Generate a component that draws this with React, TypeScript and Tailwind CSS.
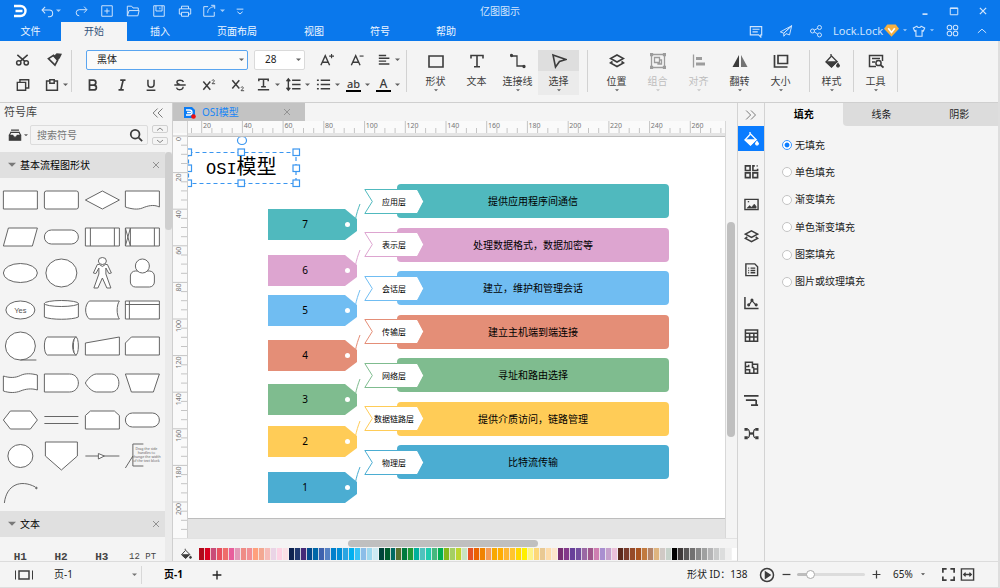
import { useState } from "react";
import type { ReactNode } from "react";

interface IconProps {
	children: ReactNode;
	className?: string;
	sw?: number;
}

const Icon = ({ children, className = "size-4", sw = 1.3 }: IconProps) => (
	<svg viewBox="0 0 16 16" fill="none" stroke="currentColor" strokeWidth={sw} className={`shrink-0 ${className}`} aria-hidden="true">
		{children}
	</svg>
);

const Caret = ({ className = "w-[5px]" }: { className?: string }) => (
	<svg viewBox="0 0 6 4" fill="currentColor" className={`shrink-0 opacity-80 ${className}`} aria-hidden="true">
		<path d="M0 .5h6L3 3.5z" />
	</svg>
);

const Divider = () => <div className="h-[42px] w-px shrink-0 self-start bg-[#d2d2d2] mt-px" />;

/* ---------- header ---------- */

const quickActions = [
	{ name: "重做", icon: <path d="M14.500 6.500H6a3.500 3.500 0 0 0 0 7M11.500 3l3.300 3.500-3.300 3.500" /> },
	{ name: "新建", icon: <path d="M2 2h12v12H2zM8 5v6M5 8h6" /> },
	{ name: "打开", icon: <path d="M1.500 13.500V2.500h5l1.500 2h6v3M1.500 13.500l2-6h11.500l-1.500 6z" /> },
	{ name: "保存", icon: <path d="M2 2h12v12H2zM4.500 2v6h7V2M9 4v2" /> },
	{ name: "打印", icon: <path d="M4 5.500v-3h8v3M4 11.500H1.500v-6h13v6H12M4 9.500h8v4.500H4z" /> },
];

const menuTabs = ["插入", "页面布局", "视图", "符号", "帮助"];

const Header = () => (
	<header className="bg-[#0a78ec] text-[#d3e6fc]">
		<div className="grid grid-cols-[1fr_auto_1fr] h-[22px] items-center">
			<div className="flex items-center pl-3">
				<svg viewBox="0 0 16 16" className="w-4 h-4 mr-3 text-white" fill="none" stroke="currentColor" strokeWidth="2.400">
					<path d="M2 3h6.500a5 5 0 0 1 0 10H2M3.500 8h7" />
				</svg>
				<button aria-label="撤销" className="flex items-center gap-px w-7">
					<Icon sw={1.100} className="size-[15px]"><path d="M2.500 6.500H10a3.500 3.500 0 0 1 0 7H8.500M5.500 3L2.200 6.500l3.300 3.500" /></Icon>
					<Caret />
				</button>
				{quickActions.map((a) => (
					<button key={a.name} aria-label={a.name} className="flex justify-center w-[26px]">
						<Icon sw={1.100} className="size-[14px]">{a.icon}</Icon>
					</button>
				))}
				<button aria-label="导出" className="flex items-center gap-1 w-[30px] pl-1">
					<Icon sw={1.100} className="size-[14px]"><path d="M7 3H2v11h12V9M6.500 10c0-4 3-6.500 7.500-7M10.500 1.500H14.500V5.500" /></Icon>
					<Caret />
				</button>
				<button aria-label="更多" className="flex justify-center w-6">
					<Icon className="size-3"><path d="M3.500 5.500h9M4.500 9L8 12l3.500-3" /></Icon>
				</button>
			</div>
			<h1 className="text-[10px] leading-none">亿图图示</h1>
			<div className="flex justify-end pr-[3px]">
				<button aria-label="最小化" className="w-[29px] flex justify-center"><Icon sw={2.600} className="size-2.5"><path d="M4 13h8" /></Icon></button>
				<button aria-label="最大化" className="w-[29px] flex justify-center"><Icon sw={1.600} className="size-2.5"><path d="M2 3h12v11H2zM2 4h12" /></Icon></button>
				<button aria-label="关闭" className="w-[29px] flex justify-center"><Icon sw={2} className="size-2.5"><path d="M3 3l10 10M13 3L3 13" /></Icon></button>
			</div>
		</div>
		<nav className="flex h-[19px] text-[10px] leading-[19px] text-[#eef6ff]">
			<button className="w-[61px]">文件</button>
			<button className="w-[66px] bg-[#f4f4f4] text-[#33527a]">开始</button>
			{menuTabs.map((t) => (
				<button key={t} className={t.length > 2 ? "w-[88px]" : "w-[66px]"}>{t}</button>
			))}
			<div className="ml-auto flex items-center pr-[3px] pb-0.5 text-[#cfe4fd]">
				<button aria-label="评论" className="w-[30px] flex justify-center"><Icon className="size-[14px]"><path d="M1.500 3h13v9.500h-1V15l-2.500-2.500H1.500zM4 6h8M4 9h6" /></Icon></button>
				<button aria-label="发送" className="w-[30px] flex justify-center"><Icon sw={1.100} className="size-[14px]"><path d="M14.500 2L1.500 9l4 1.500zM14.500 2l-2.500 10.500-4-1.500M14.500 2l-9 8.500V14L8 11" /></Icon></button>
				<button aria-label="分享" className="w-[30px] flex justify-center">
					<Icon sw={1.100} className="size-[14px]"><circle cx="4" cy="8" r="2.300" /><circle cx="12" cy="4" r="2.300" /><circle cx="12" cy="12.500" r="2.300" /><path d="M6 7l4-2M6 9l4 2.500" /></Icon>
				</button>
				<button className="flex items-center w-[77px] pl-0.5">
					<span className="text-[11px] leading-none">Lock.Lock</span>
					<svg viewBox="0 0 16 14" className="w-[15px] ml-px">
						<path d="M3.500.5h9L16 5l-8 8.500L0 5z" fill="#f5b041" />
						<path d="M4.500 4.500L8 9l3.500-4.500" fill="none" stroke="#fff" strokeWidth="1.800" />
					</svg>
					<Caret className="w-1 ml-1" />
				</button>
				<button aria-label="皮肤" className="flex items-center gap-1 w-[29px] pl-1">
					<Icon className="size-[14px]"><path d="M5.500 2.500c1 2 4 2 5 0l4 2-1.500 3.500-1.500-.5v6.500h-7V7.500L3 8 1.500 4.500z" /></Icon>
					<Caret className="w-1" />
				</button>
				<button aria-label="应用" className="w-[30px] flex justify-center">
					<Icon className="size-[13px]"><rect x="1.500" y="1.500" width="5.500" height="5.500" rx="2.500" /><rect x="9" y="1.500" width="5.500" height="5.500" rx="2.500" /><rect x="1.500" y="9" width="5.500" height="5.500" rx="2.500" /><rect x="9" y="9" width="5.500" height="5.500" rx="2.500" /></Icon>
				</button>
				<button aria-label="收起" className="w-[30px] flex justify-center"><Icon className="size-3"><path d="M2.500 10.500L8 5.500l5.500 5" /></Icon></button>
			</div>
		</nav>
	</header>
);

/* ---------- ribbon ---------- */

interface BigTool {
	name: string;
	icon: ReactNode;
	disabled?: boolean;
	active?: boolean;
	plain?: boolean;
}

const layersIcon = <path d="M8 2l6.500 3.500L8 9 1.500 5.500zM3.500 8.500l-2 1.500L8 13.500 14.500 10l-2-1.500" strokeWidth="1.600" />;

const insertTools: BigTool[] = [
	{ name: "形状", icon: <path d="M1 3h14v11H1z" strokeWidth="1.600" /> },
	{ name: "文本", plain: true, icon: <path d="M2 5.500V2.500h12v3M8 2.500v11M5 13.700h6" strokeWidth="1.600" /> },
	{ name: "连接线", icon: <><path d="M2 3h5v10h6" /><circle cx="1.500" cy="2.500" r="1" fill="currentColor" /><circle cx="14" cy="13.500" r="1" fill="currentColor" /></> },
	{ name: "选择", active: true, icon: <path d="M2 2l13 4.500L8.500 8.500 4.500 14z" strokeWidth="1.600" /> },
];

const arrangeTools: BigTool[] = [
	{ name: "位置", icon: layersIcon },
	{ name: "组合", disabled: true, icon: <path d="M1.500 1.500h13v13h-13zM4.500 4.500h5v5h-5zM8 9.500V11h3.500V7H10M.5.5h2v2h-2zM13.500.5h2v2h-2zM.5 13.500h2v2h-2zM13.500 13.500h2v2h-2z" /> },
	{ name: "对齐", disabled: true, icon: <><path d="M2.500 1.500v13" /><path d="M5 5.500h6M5 11h9" strokeWidth="3" /></> },
	{ name: "翻转", icon: <><path d="M7 2v12H.5z" fill="currentColor" stroke="none" /><path d="M9 2v12h6.500z" fill="currentColor" stroke="none" opacity=".7" /></> },
	{ name: "大小", icon: <path d="M1.500 2v12h13M5 2.500h9.500v8H5z" strokeWidth="1.700" /> },
];

const bucket = (
	<>
		<path d="M7 3.500L2 9l5.500 5L13 8.500 7 2.500V1" />
		<path d="M3 9h9.500l-5 4.500zM14 10.500l1.300 2a1.300 1.300 0 1 1-2.600 0z" fill="currentColor" />
	</>
);

const ToolButton = ({ tool }: { tool: BigTool }) => (
	<button
		disabled={tool.disabled}
		className={`flex flex-col items-center w-[41px] h-[45px] text-[10px] text-[#3c3c3c] disabled:text-[#bdbdbd] ${tool.active ? "bg-[#ebebeb]" : ""}`}
	>
		<span className={`flex w-full h-[21px] items-center justify-center ${tool.active ? "bg-[#dedede]" : ""} ${tool.disabled ? "text-[#9c9c9c]" : ""}`}>
			<Icon>{tool.icon}</Icon>
		</span>
		<span className="leading-[15px] mt-[3px] whitespace-nowrap">{tool.name}</span>
		{!tool.plain && <Caret className="w-1" />}
	</button>
);

const textTools = [
	{ name: "加粗", icon: <path d="M4 2.500h4.500a2.700 2.700 0 0 1 0 5.500H4zM4 8h5a2.800 2.800 0 0 1 0 5.700H4z" strokeWidth="2" /> },
	{ name: "斜体", icon: <path d="M6 2.500h6M4 13.500h6M9.300 2.500L6.700 13.500" strokeWidth="1.900" /> },
	{ name: "下划线", icon: <path d="M4.500 2v5a3.500 3.500 0 0 0 7 0V2M3 14h10" strokeWidth="1.700" /> },
	{ name: "删除线", icon: <path d="M12 4.500C11 2 5 1.800 4.500 4.500 4.300 6 5.500 7 8 7.500M1.500 8h13M11.500 10c.5 4-6.500 4.500-7.500 1" strokeWidth="1.600" /> },
	{ name: "上标", icon: <><path d="M1.500 4l8 9.500M9.500 4l-8 9.500" strokeWidth="1.700" /><path d="M11.500 3c.5-1.500 3-1 2.500.5L11.500 6.500H15" strokeWidth="1" /></> },
	{ name: "下标", icon: <><path d="M1.500 2.500l8 9.500M9.500 2.500l-8 9.500" strokeWidth="1.700" /><path d="M11.500 11c.5-1.500 3-1 2.500.5L11.500 14.500H15" strokeWidth="1" /></> },
];

const menuTools = [
	{ name: "文字方向", icon: <path d="M3 4.500v-2h10v2M8 2.500V10M5.500 10.500h5M2 13.500h12" strokeWidth="1.600" /> },
	{ name: "行距", icon: <path d="M6.500 3.500h9M6.500 8h9M6.500 12.500h9M2.500 2v12M.5 4.500l2-2.500 2 2.500M.5 11.500l2 2.500 2-2.500" strokeWidth="1.500" /> },
	{ name: "列表", icon: <path d="M5 3.500h10M5 8h10M5 12.500h10M1 3.500h2M1 8h2M1 12.500h2" strokeWidth="1.600" /> },
];

const Ribbon = () => (
	<div className="flex h-[62px] pt-2 bg-[#f4f4f4] border-b border-[#cfcfcf] text-[#3c3c3c]">
		<div className="grid grid-cols-[35px_28px] grid-rows-[21px_21px] gap-y-1 pl-2 w-[71px] content-start">
			<button aria-label="剪切" className="flex items-center justify-center pr-1.5">
				<Icon sw={1.600} className="size-[15px]"><circle cx="4" cy="11.500" r="2.300" /><circle cx="12" cy="11.500" r="2.300" /><path d="M2.500 3l8 7M13.500 3l-8 7" /></Icon>
			</button>
			<button aria-label="格式刷" className="flex items-center">
				<Icon className="size-[15px] ml-1"><path d="M1.500 7l5.500-3.500 4.500 5-3 5.500zM7 4l4.500 5" strokeWidth="1.700" /><path d="M8 4.500l3 3.500 2-1.500 2-4-4.500-.5z" fill="currentColor" /></Icon>
			</button>
			<button aria-label="复制" className="flex items-center justify-center pr-1.5">
				<Icon sw={1.600} className="size-[14px]"><path d="M1.500 5h9.500v9H1.500zM4.500 4.500V2h10v9.500H11" /></Icon>
			</button>
			<button aria-label="粘贴" className="flex items-center gap-1 pl-0.5">
				<Icon sw={1.700} className="size-[14px]"><path d="M5 3.500H1.800v10.500h12.400V3.500H11M5.500 2h5v4h-5z" /></Icon>
				<Caret />
			</button>
		</div>
		<Divider />
		<div className="flex flex-col gap-1 pl-2 w-[334px]">
			<div className="flex h-[21px] items-center">
				<label className="relative ml-1.5">
					<select aria-label="字体" className="appearance-none block w-[162px] h-5 border border-[#5aa5f0] rounded-xs bg-[#fafafa] pl-2.5 text-[10px] text-[#222]">
						<option>黑体</option>
						<option>宋体</option>
					</select>
					<Caret className="w-[5px] absolute right-1 top-2 pointer-events-none" />
				</label>
				<label className="relative ml-1.5">
					<select aria-label="字号" className="appearance-none block w-[51px] h-5 border border-[#dadada] rounded-xs bg-white pl-2.5 text-[10px] text-[#222]">
						<option>28</option>
						<option>36</option>
					</select>
					<Caret className="w-[5px] absolute right-1 top-2 pointer-events-none" />
				</label>
				<button aria-label="增大字号" className="ml-[7px] w-[30px] flex justify-center">
					<Icon sw={1.600} className="size-[14px]"><path d="M1 14L6 3l5 11M3 10.500h6" /><path d="M10.500 3.500H16M13.200 1v5" strokeWidth="1.300" /></Icon>
				</button>
				<button aria-label="减小字号" className="w-[30px] flex justify-center">
					<Icon sw={1.600} className="size-[14px]"><path d="M1.500 14l5-11 5 11M3.500 10.500h6" /><path d="M11 3.500h4.500" strokeWidth="1.300" /></Icon>
				</button>
				<button aria-label="对齐方式" className="flex items-center gap-1 w-[30px] pl-1.5">
					<Icon sw={1.700} className="size-[13px]"><path d="M1 3h9M1 6.500h13M1 10h9M1 13.500h13" /></Icon>
					<Caret />
				</button>
			</div>
			<div className="flex h-[21px] items-center">
				<div className="flex gap-1 mr-0.5">
					{textTools.map((t) => (
						<button key={t.name} aria-label={t.name} className="flex items-center justify-center w-[25px] h-[21px]">
							<Icon className="size-[14px]">{t.icon}</Icon>
						</button>
					))}
				</div>
				{menuTools.map((t) => (
					<button key={t.name} aria-label={t.name} className="flex items-center gap-1 w-[30px] pl-1">
						<Icon className="size-[15px]">{t.icon}</Icon>
						<Caret />
					</button>
				))}
				<button aria-label="突出显示" className="flex items-center gap-1 w-[30px] pl-1">
					<span className="w-[15px] border-b-2 border-black text-[11px] leading-[12px] font-medium text-center">ab</span>
					<Caret />
				</button>
				<button aria-label="字体颜色" className="flex items-center gap-1 w-[30px] pl-1">
					<span className="w-[15px] border-b-2 border-black text-[12px] leading-[12px] text-center font-medium">A</span>
					<Caret />
				</button>
			</div>
		</div>
		<Divider />
		<div className="flex px-2 mt-px">
			{insertTools.map((t) => <ToolButton key={t.name} tool={t} />)}
		</div>
		<Divider />
		<div className="flex px-2 mt-px">
			{arrangeTools.map((t) => <ToolButton key={t.name} tool={t} />)}
		</div>
		<Divider />
		<div className="flex mt-px px-px"><ToolButton tool={{ name: "样式", icon: bucket }} /></div>
		<Divider />
		<div className="flex mt-px px-px">
			<ToolButton tool={{ name: "工具", icon: <><path d="M8 13.500H1.500v-11h13V8M4 5.500h8M4 9h3" strokeWidth="1.500" /><circle cx="10.500" cy="10" r="2.600" strokeWidth="1.500" /><path d="M12.500 12l3 2.500" strokeWidth="1.700" /></> }} />
		</div>
		<Divider />
	</div>
);

/* ---------- symbol library ---------- */

const box = "M3 9h34v18H3z";

const symbols: { id: string; art: ReactNode }[] = [
	{ id: "process", art: <path d={box} /> },
	{ id: "rounded", art: <rect x="3" y="9" width="34" height="18" rx="2" /> },
	{ id: "decision", art: <path d="M20 9l17 9-17 9-17-9z" /> },
	{ id: "document", art: <path d="M3 9h34v16c-6-3-12-1-17 1s-11 1-17-1z" /> },
	{ id: "data", art: <path d="M8 9h29l-5 18H3z" /> },
	{ id: "terminator", art: <rect x="3" y="11" width="34" height="14" rx="7" /> },
	{ id: "predefined", art: <><path d={box} /><path d="M8 9v18M32 9v18" /></> },
	{ id: "loop", art: <><path d={box} /><path d="M8 9v18M32 9v18M3 9l5 18M8 9L3 27" /></> },
	{ id: "ellipse", art: <ellipse cx="20" cy="18" rx="17" ry="9.500" /> },
	{ id: "circle", art: <ellipse cx="20" cy="18" rx="15.500" ry="14" /> },
	{ id: "man", art: <><ellipse cx="20" cy="6" rx="4" ry="3.500" /><path d="M15 9.500h2l3 2 3-2h2l4 8.500-2.500.5-3-5.500v6l5 14h-4L20 23l-4.500 10h-4l5-14v-6l-3 5.500L11 18z" /></> },
	{ id: "person", art: <><rect x="8" y="16" width="24" height="16" rx="5" /><ellipse cx="20" cy="11" rx="7" ry="7" /></> },
	{ id: "yes", art: <><ellipse cx="20" cy="18" rx="14.500" ry="9" /><text x="20" y="21" textAnchor="middle" fontSize="7.500" fontWeight="500" fontFamily="Liberation Sans, sans-serif" fill="#555" stroke="none">Yes</text></> },
	{ id: "database", art: <><path d="M3 11v14c6 3 28 3 34 0V11" /><ellipse cx="20" cy="11.500" rx="17" ry="3" /></> },
	{ id: "stored", art: <path d="M7 9h30c-3 4-3 14 0 18H7C2 23 2 13 7 9z" /> },
	{ id: "internal", art: <><path d={box} /><path d="M7 9v18M3 12.500h34" /></> },
	{ id: "sequential", art: <><ellipse cx="20" cy="18" rx="15" ry="14" /><path d="M20 32h16" /></> },
	{ id: "direct", art: <><path d="M6 9h29c-5 1-5 17 0 18H6c-4-1-4-17 0-18z" /><ellipse cx="34.500" cy="18" rx="2.500" ry="9" /></> },
	{ id: "manual-input", art: <path d="M3 15l34-6v18H3z" /> },
	{ id: "card", art: <path d="M9 9h28v18H3V15z" /> },
	{ id: "tape", art: <path d="M3 11c6 2 12 2 17-.5s11-2 17-.5v15c-6-2-12-1-17 1s-11 2-17 0z" /> },
	{ id: "delay", art: <path d="M3 9h25c12 0 12 18 0 18H3z" /> },
	{ id: "display", art: <path d="M14 9h15c10 0 10 18 0 18H14c-4 0-9-5-11-9 2-4 7-9 11-9z" /> },
	{ id: "manual-op", art: <path d="M3 9h34l-6 18H9z" /> },
	{ id: "preparation", art: <path d="M10 9h20l7 9-7 9H10l-7-9z" /> },
	{ id: "parallel", art: <path d="M3 14.500h34M3 21.500h34" /> },
	{ id: "loop-limit", art: <path d="M8 9h24l5 4.500V27H3V13.500z" /> },
	{ id: "end", art: <rect x="3" y="11" width="34" height="14" rx="7" /> },
	{ id: "reference", art: <ellipse cx="20" cy="18" rx="12.500" ry="11.500" /> },
	{ id: "off-page", art: <path d="M4 4h32v14L20 32 4 18z" /> },
	{ id: "connector", art: <><path d="M3 18h34" /><path d="M16 15.500l6 2.500-6 3z" /></> },
	{
		id: "note",
		art: (
			<>
				<path d="M21 6H10.500v22H21M3 30l7.500-12" fill="none" />
				<g fontSize="3.500" fill="#666" stroke="none" textAnchor="middle">
					<text x="24" y="12">Drag the side</text>
					<text x="24" y="16">handles to</text>
					<text x="24" y="20">change the width</text>
					<text x="24" y="24">of the text block</text>
				</g>
			</>
		),
	},
	{ id: "arc", art: <><path d="M4 28C6 10 20 4 35 12" fill="none" /><circle cx="36" cy="13" r=".8" fill="#555" /></> },
];

const SectionTitle = ({ title }: { title: string }) => (
	<div className="flex items-center h-[26px] bg-[#e0e0e0] pl-2 pr-[5px] text-[10px] text-black shrink-0">
		<button className="flex items-center flex-1"><Caret className="w-2 mr-1 text-[#606060]" />{title}</button>
		<button aria-label="关闭" className="text-[#666]"><Icon className="size-2"><path d="M2 2l12 12M14 2L2 14" /></Icon></button>
	</div>
);

const SymbolLibrary = () => (
	<aside className="flex flex-col w-[173px] shrink-0 border-r border-[#cfcfcf] bg-[#f4f4f4] text-[10px]">
		<div className="flex items-center justify-between h-[19px] pl-1 pr-2 text-[11px] text-[#444]">
			<h2>符号库</h2>
			<button aria-label="折叠" className="text-[#777]"><Icon className="size-3"><path d="M7.500 2L1.500 8l6 6M14 2L8 8l6 6" /></Icon></button>
		</div>
		<div className="flex items-center h-[30px] pl-2 pr-1 pb-1 text-[#3c3c3c]">
			<button aria-label="库" className="flex items-center gap-0.5 w-[22px]">
				<Icon className="size-[14px]"><path d="M3.500 2.500h9M2.500 5h11" /><path d="M1.500 8.500h4l1 2h3l1-2h4v5.500h-13z" fill="currentColor" /><path d="M1.500 8.500L3 5.500M14.500 8.500L13 5.500" /></Icon>
				<Caret className="w-1" />
			</button>
			<div className="flex items-center flex-1 min-w-0 h-5 border border-[#dcdcdc] rounded-xs">
				<input aria-label="搜索符号" placeholder="搜索符号" className="flex-1 min-w-0 bg-transparent pl-1.5 outline-none placeholder:text-[#777]" />
				<button aria-label="搜索" className="pr-1"><Icon sw={2} className="size-[14px]"><circle cx="7" cy="7" r="5" /><path d="M11 11l4 4" /></Icon></button>
			</div>
			<div className="flex flex-col gap-1 ml-1 text-[#777]">
				<button aria-label="上一个" className="flex justify-center items-center w-4 h-2 border border-[#d0d0d0] rounded-xs"><Icon sw={1.800} className="size-2"><path d="M2 11l6-5 6 5" /></Icon></button>
				<button aria-label="下一个" className="flex justify-center items-center w-4 h-2 border border-[#d0d0d0] rounded-xs"><Icon sw={1.800} className="size-2"><path d="M2 6l6 5 6-5" /></Icon></button>
			</div>
		</div>
		<div className="flex flex-1 min-h-0 overflow-hidden">
			<div className="flex flex-col flex-1 min-w-0">
				<SectionTitle title="基本流程图形状" />
				<div className="grid grid-cols-4 grid-rows-9 h-[333px] pt-1 pr-0.5 shrink-0">
					{symbols.map((s) => (
						<svg key={s.id} viewBox="0 0 40 36" className="w-full h-9 self-center" fill="#fff" stroke="#666" strokeWidth="1">
							{s.art}
						</svg>
					))}
				</div>
				<SectionTitle title="文本" />
				<div className="grid grid-cols-4 items-end h-6 text-center font-['Liberation_Mono','Noto_Sans_CJK_SC',monospace] font-bold text-[11px] leading-[8px] text-[#444] pr-0.5">
					<span>H1</span>
					<span>H2</span>
					<span>H3</span>
					<span className="text-[9px] font-normal">12 PT</span>
				</div>
			</div>
			<div className="w-[7px] bg-[#ebebeb]"><div className="h-[78px] rounded-full bg-[#cfcfcf]" /></div>
		</div>
	</aside>
);

/* ---------- canvas ---------- */

const layers = [
	{ no: 7, name: "应用层", text: "提供应用程序间通信", color: "#50b9be", tag: 72 },
	{ no: 6, name: "表示层", text: "处理数据格式，数据加密等", color: "#dda5d0", tag: 118 },
	{ no: 5, name: "会话层", text: "建立，维护和管理会话", color: "#70bdf2", tag: 158 },
	{ no: 4, name: "传输层", text: "建立主机端到端连接", color: "#e48e77", tag: 203 },
	{ no: 3, name: "网络层", text: "寻址和路由选择", color: "#7fbc8f", tag: 247 },
	{ no: 2, name: "数据链路层", text: "提供介质访问，链路管理", color: "#ffcc57", tag: 289 },
	{ no: 1, name: "物理层", text: "比特流传输", color: "#4badd2", tag: 335 },
];

const handles = ["0 16", "0 31", "53 0", "53 31", "108 0", "108 16", "108 31", "0 0"];

const Diagram = () => (
	<>
		{layers.map((l, i) => (
			<div key={l.no}>
				<div className="absolute left-[80px] w-[89px] h-[31px]" style={{ top: l.tag }}>
					<svg viewBox="0 0 89 31" className="absolute inset-0 w-[89px] h-[31px] overflow-visible">
						<path d="M0 0h77l12 10v12l-12 9H0z" fill={l.color} />
						<path d="M87.500 10C88.500 5 90 0 92 -5" fill="none" stroke={l.color} />
						<circle cx="79.500" cy="15.500" r="2.500" fill="#fff" />
					</svg>
					<span className="relative flex items-center justify-center w-[74px] h-full text-[10px]">{l.no}</span>
				</div>
				<div
					className="absolute left-[209px] w-[272px] h-[34px] rounded-[4px] flex items-center justify-center text-[10px] whitespace-nowrap"
					style={{ top: 47 + Math.round(i * 43.5), backgroundColor: l.color }}
				>
					{l.text}
				</div>
				<div className="absolute left-[176px] w-[60px] h-[25px]" style={{ top: 52 + Math.floor(i * 43.5) }}>
					<svg viewBox="0 0 60 25" className="absolute inset-0 w-[60px] h-[25px]">
						<path d="M.8.5H53l6.500 12L53 24.500H.8l7.500-12z" fill="#fff" stroke={l.color} />
						<path d="M34 1h19l6 11.500L53 24H34z" fill="#fff" />
					</svg>
					<span className="relative flex items-center justify-center w-full h-full text-[8px] whitespace-nowrap">{l.name}</span>
				</div>
			</div>
		))}
		<div className="absolute left-0 top-[15px] w-[109px] h-8">
			<svg viewBox="0 0 109 32" className="absolute inset-0 w-[109px] h-8 overflow-visible" fill="#fff" stroke="#3a96f0" strokeWidth="1.200">
				<path d="M.5.500h107.500v31H.5z" strokeDasharray="4 3" />
				{handles.map((h) => {
					const [x, y] = h.split(" ").map(Number);
					return <rect key={h} x={x - 3} y={y - 3} width="6.500" height="6.500" />;
				})}
				<ellipse cx="54" cy="-11.500" rx="4.500" ry="4" />
			</svg>
			<span className="relative block pl-[18px] text-[20px] leading-[30px] whitespace-nowrap">
				<span className="font-['Liberation_Mono',monospace] text-[17px]">OSI</span>模型
			</span>
		</div>
	</>
);

const range = (n: number) => Array.from({ length: n }, (_, i) => i);

const TopRuler = () => (
	<svg className="w-full h-3 bg-[#fafafa]" stroke="#c4c4c4">
		{range(80).map((i) => (
			<path key={i} d={`M${(3.5 + i * 10.18).toFixed(1)} ${i % 4 === 1 ? 0 : 7}V12`} />
		))}
		{range(13).map((i) => (
			<text key={i} x={15 + i * 40.7} y="7" fontSize="7" fill="#777" stroke="none">{(i + 1) * 20}</text>
		))}
	</svg>
);

const SideRuler = () => (
	<svg className="w-full h-full bg-[#fafafa]" stroke="#c4c4c4">
		{range(80).map((i) => (
			<path key={i} d={`M${i % 4 === 0 ? 0 : 8} ${(3 + i * 9.15).toFixed(1)}H15`} />
		))}
		{range(11).map((i) => (
			<text key={i} x="8" y={4 + i * 36.6} fontSize="7" fill="#777" stroke="none" textAnchor="end" transform={`rotate(-90 8 ${4 + i * 36.6})`}>{i * 20}</text>
		))}
	</svg>
);

const palette = [
	"#b0091b", "#d8001f", "#c94c78", "#e8505f", "#ef6d6a", "#e85f9c", "#e29ab8", "#ef8c86", "#f28f94", "#ffa07c",
	"#f3a892", "#f6bcb8", "#ead4e6", "#fdd3e4", "#fbe1e6", "#0e2350", "#20386f", "#452a78", "#054a8c", "#0067a8",
	"#3e62ae", "#5682c4", "#0080cc", "#008dd6", "#2aa5e2", "#00b0f0", "#35c3f7", "#8bbde8", "#9ed8ee", "#cdeaf3",
	"#00433a", "#005b2e", "#006a62", "#56702f", "#007a3e", "#1f9a35", "#00b09b", "#4fc2bd", "#1fcbad", "#45b87e",
	"#00ae50", "#83b81a", "#a5cf63", "#bcd630", "#c9e3c1", "#e65124", "#eb6100", "#f08300", "#f59b55", "#f8a800",
	"#ffac00", "#ffb52f", "#ffc52e", "#ffd800", "#fff000", "#fdf388", "#fdd777", "#e9c993", "#fddcab", "#fde6cc",
	"#772f73", "#83398a", "#67409a", "#734e9f", "#9a68a4", "#9f558c", "#cf7eb1", "#a98fd0", "#c5a0cc", "#ecc1da",
	"#5c2a1d", "#7a3c2c", "#964a28", "#aa5420", "#c17a3f", "#b48468", "#dfb580", "#d0c9c5", "#c7d2ca", "#000000",
	"#3f3a3a", "#595757", "#727171", "#898989", "#9fa0a0", "#b5b5b6", "#c9caca", "#dcdddd", "#efefef", "#ffffff",
];

const Workspace = () => (
	<main className="flex flex-col flex-1 min-w-0 bg-[#f4f4f4]">
		<div className="flex h-[18px] shrink-0">
			<div className="flex items-center w-[132px] bg-[#c3c3c3] pl-2.5 pr-3.5 text-[10px] text-[#1a86f5]">
				<svg viewBox="0 0 13 13" className="w-[13px] h-[13px] mr-1.5">
					<path d="M1 1h8l3 3v8H1z" fill="#0a7cf5" />
					<path d="M3 4h3.500a2.500 2.500 0 0 1 0 5H3M4 6.500h4" fill="none" stroke="#fff" strokeWidth="1.300" />
					<circle cx="10.500" cy="10.500" r="2.300" fill="#f01010" />
				</svg>
				<span className="flex-1">OSI模型</span>
				<button aria-label="关闭标签" className="text-[#777]"><Icon className="size-2"><path d="M2 2l12 12M14 2L2 14" /></Icon></button>
			</div>
		</div>
		<div className="grid grid-cols-[15px_minmax(0,1fr)_12px] grid-rows-[12px_minmax(0,1fr)] flex-1 min-h-0">
			<div className="border-r border-[#d0d0d0]" />
			<TopRuler />
			<div className="row-span-2 border-l border-[#d8d8d8] px-px pt-[101px]">
				<div className="w-2 h-[215px] rounded-full bg-[#bfbfbf]" />
			</div>
			<div className="border-r border-[#d0d0d0] min-h-0"><SideRuler /></div>
			<div className="flex flex-col bg-[#e4e4e4] pt-[3px] pb-[19px] overflow-hidden">
				<div className="relative flex-1 bg-white border-y border-[#bdbdbd] overflow-hidden text-black"><Diagram /></div>
			</div>
		</div>
		<div className="flex items-center h-2.5 shrink-0 border-t border-[#e2e2e2]">
			<div className="ml-[175px] w-[190px] h-[7px] rounded-full bg-[#bfbfbf]" />
		</div>
		<div className="flex h-[13px] shrink-0 pb-px">
			<button aria-label="填充颜色" className="w-[26px] flex items-center justify-center text-[#3c3c3c]"><Icon className="size-3">{bucket}</Icon></button>
			<div className="flex flex-1">
				{palette.map((c) => (
					<button key={c} aria-label={c} className="flex-1 border-r border-[#f4f4f4]/80" style={{ backgroundColor: c }} />
				))}
			</div>
		</div>
	</main>
);

/* ---------- right side ---------- */

const sideTools = [
	{ name: "填充", icon: bucket },
	{ name: "主题", icon: <path d="M1.500 2h5v5h-5zM1.500 9.500h5v5h-5zM9.500 9.500h5v5h-5zM11.500 2h-2v5h5V5M13.500 2h1" strokeWidth="1.700" /> },
	{ name: "图片", icon: <><path d="M1 2.500h14v11H1z" strokeWidth="1.500" /><path d="M3 12l3-3 2 2 3-3.500L13 10v2z" fill="currentColor" strokeWidth=".5" /><path d="M4 5h1.500" /></> },
	{ name: "图层", icon: layersIcon },
	{ name: "文档", icon: <path d="M2 2h9.500L14.500 5v9.500H2zM4.500 6.500h1M7 6.500h5M4.500 9h1M7 9h5M4.500 11.500h1M7 11.500h5" strokeWidth="1.500" /> },
	{ name: "图表", icon: <><path d="M1 2v12.500h14.500" strokeWidth="1.600" /><path d="M5 11l3.500-5L13 11" /><circle cx="5" cy="10.500" r="1" fill="currentColor" /><circle cx="8.500" cy="5.500" r="1" fill="currentColor" /><circle cx="13" cy="10.500" r="1" fill="currentColor" /></> },
	{ name: "表格", icon: <path d="M1.500 2h13v12h-13zM1.500 5.500h13M1.500 9.500h13M6 6v8M10.500 6v8" strokeWidth="1.600" /> },
	{ name: "平面图", icon: <path d="M1.500 2.500H9V4.500h5.500v9.500h-13zM1.500 7H5V5M1.500 10.500H6V14M9 4.500V8h2M14.500 9.500H10.500V14" strokeWidth="1.600" /> },
	{ name: "甘特图", icon: <path d="M0 3h15.500M2 7.500h7M7.500 13h7.500M13 7.500v5M9 7.500h4" strokeWidth="1.800" /> },
	{ name: "思维导图", icon: <><path d="M.5 3.500h3.500M12 3.500h3.500M.5 12.500h3.500M12 12.500h3.500" strokeWidth="3" /><path d="M4 3.500c2.500 0 2.500 9 0 9M12 3.500c-2.500 0-2.500 9 0 9" /><path d="M5.500 8h5" strokeWidth="2.500" /></> },
];

const SideTools = () => (
	<div className="flex flex-col w-7 shrink-0 border-x border-[#d3d3d3] bg-[#f4f4f4] text-[#3c3c3c]">
		<button aria-label="展开" className="h-[23px] flex items-center justify-center text-[#777]"><Icon className="size-3"><path d="M1.500 2l6 6-6 6M8 2l6 6-6 6" /></Icon></button>
		<div className="flex flex-col justify-between h-80">
			{sideTools.map((t, i) => (
				<button key={t.name} aria-label={t.name} className={`flex items-center justify-center h-[25px] ${i === 0 ? "bg-[#0a7cff] text-white" : ""}`}>
					<Icon className={i === 0 ? "size-4" : "size-[15px]"}>{t.icon}</Icon>
				</button>
			))}
		</div>
	</div>
);

const fillModes = ["无填充", "单色填充", "渐变填充", "单色渐变填充", "图案填充", "图片或纹理填充"];

const FillPanel = () => {
	const [mode, setMode] = useState(fillModes[0]);

	return (
		<aside className="w-[233px] shrink-0 bg-[#f4f4f4] text-[10px] text-[#1c1c1c]">
			<div className="grid grid-cols-3 h-[23px]">
				<button className="font-bold text-black">填充</button>
				<button className="bg-[#dcdcdc] rounded-bl-[4px]">线条</button>
				<button className="bg-[#dcdcdc]">阴影</button>
			</div>
			<div className="flex flex-col justify-between h-[153px] mt-[11px] pl-[17px]">
				{fillModes.map((m) => (
					<label key={m} className="flex items-center gap-[3px] h-4">
						<input
							type="radio"
							name="fill"
							checked={mode === m}
							onChange={() => setMode(m)}
							className="appearance-none size-2.5 rounded-full border border-[#c4c4c4] bg-white checked:border-[#3a96ff] checked:bg-[radial-gradient(circle,#0a7cff_35%,#ffffff_50%)]"
						/>
						{m}
					</label>
				))}
			</div>
		</aside>
	);
};

/* ---------- status bar ---------- */

const StatusBar = () => {
	const [zoom, setZoom] = useState(15);

	return (
		<footer className="flex items-center h-[26px] shrink-0 border-t border-[#dcdcdc] bg-[#f4f4f4] text-[10px] text-[#222]">
			<button aria-label="页面视图" className="w-12 flex justify-center"><svg viewBox="0 0 18 12" className="w-[18px]" fill="none" stroke="#3c3c3c"><path d="M.5 1.500v9M17.500 1.500v9" /><path d="M4 2h10v8H4z" strokeWidth="1.500" /></svg></button>
			<label className="relative">
				<select aria-label="页面" className="appearance-none block w-[94px] h-[18px] pl-1.5 border-r border-[#d8d8d8]">
					<option>页-1</option>
				</select>
				<Caret className="w-[5px] absolute right-[5px] top-[7px] pointer-events-none text-[#555]" />
			</label>
			<button className="font-bold text-black w-[63px]">页-1</button>
			<button aria-label="新建页面" className="w-6 flex justify-center"><Icon sw={2.200} className="size-[10px]"><path d="M8 1v14M1 8h14" /></Icon></button>
			<div className="ml-auto flex items-center pr-[23px] text-[#3c3c3c]">
				<span className="text-[#222] w-[72px] whitespace-nowrap">形状 ID：138</span>
				<button aria-label="播放"><Icon sw={1.500}><circle cx="8" cy="8" r="6.500" /><path d="M6.500 5l4.500 3-4.500 3z" fill="currentColor" /></Icon></button>
				<button aria-label="缩小" className="w-[22px] flex justify-center"><Icon sw={2.200} className="size-[9px]"><path d="M1 8h14" /></Icon></button>
				<input
					type="range"
					aria-label="缩放"
					value={zoom}
					onChange={(e) => setZoom(Number(e.target.value))}
					className="appearance-none w-[68px] h-[3px] rounded-full bg-[linear-gradient(90deg,#bdbdbd_20%,#dcdcdc_20%)] [&::-webkit-slider-thumb]:appearance-none [&::-webkit-slider-thumb]:size-[9px] [&::-webkit-slider-thumb]:rounded-full [&::-webkit-slider-thumb]:bg-white [&::-webkit-slider-thumb]:border [&::-webkit-slider-thumb]:border-[#aaaaaa]"
				/>
				<button aria-label="放大" className="w-[22px] flex justify-center"><Icon sw={2.200} className="size-[9px]"><path d="M8 1v14M1 8h14" /></Icon></button>
				<button className="flex items-center gap-2 ml-1.5 w-[48px] text-[#222]">65%<Caret className="w-1" /></button>
				<button aria-label="全屏" className="mr-1"><Icon sw={1.800} className="size-[15px]"><path d="M6 2H2v4M10 2h4v4M6 14H2v-4M10 14h4v-4" /></Icon></button>
				<button aria-label="适应宽度"><Icon sw={1.500} className="size-[15px]"><path d="M1.500 2h13v12h-13zM4 8h8M6 6L4 8l2 2M10 6l2 2-2 2" /></Icon></button>
			</div>
		</footer>
	);
};

const App = () => (
	<div className="flex flex-col h-screen bg-[#dedede] font-['Noto_Sans','Noto_Sans_CJK_SC',sans-serif]">
		<Header />
		<div className="flex flex-col flex-1 min-h-0 pr-0.5 pb-px">
			<Ribbon />
			<div className="flex flex-1 min-h-0">
				<SymbolLibrary />
				<Workspace />
				<SideTools />
				<FillPanel />
			</div>
			<StatusBar />
		</div>
	</div>
);

export default App;
